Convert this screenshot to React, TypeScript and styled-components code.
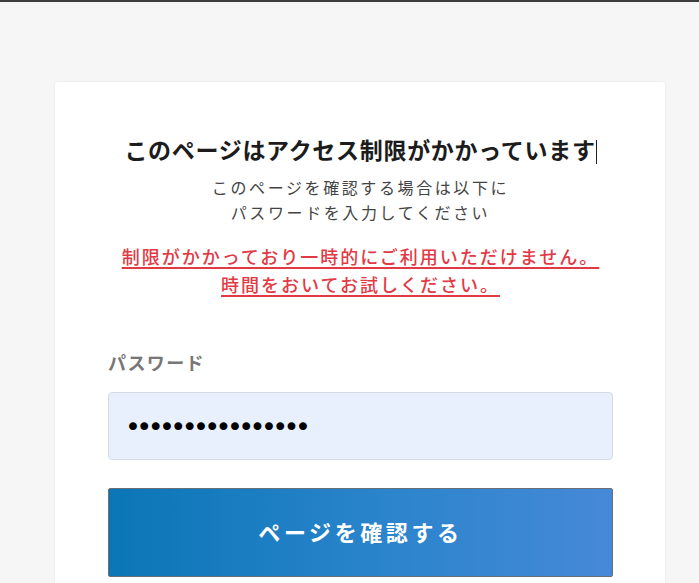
import React from "react";
import styled, { createGlobalStyle } from "styled-components";

const Global = createGlobalStyle`
  html, body { margin: 0; padding: 0; background: #f6f6f6; }
  body { font-family: "Noto Sans CJK JP", "Noto Sans", sans-serif; overflow: hidden; }
`;

const TopLine = styled.div`
  height: 2px;
  background: #3c3c3c;
`;

const Page = styled.div`
  padding: 80px 0 0 55px;
`;

const Card = styled.div`
  width: 610px;
  box-sizing: border-box;
  background: #fff;
  border-radius: 4px;
  box-shadow: 0 0 3px rgba(0, 0, 0, 0.08);
  padding: 51px 52px 40px 53px;
  display: flex;
  flex-direction: column;
  min-height: 560px;
`;

const Title = styled.h1`
  margin: 0;
  text-align: center;
  font-size: 23px;
  font-weight: 700;
  letter-spacing: 0.7px;
  line-height: 33px;
  color: #1c1c1c;
  white-space: nowrap;
`;

const Caret = styled.span`
  display: inline-block;
  width: 1px;
  height: 24px;
  background: #222;
  vertical-align: -5px;
`;

const Sub = styled.p`
  margin: 9px 0 0;
  text-align: center;
  font-size: 16px;
  line-height: 25px;
  letter-spacing: 2.6px;
  color: #444;
`;

const Alert = styled.p`
  margin: 17px 0 0;
  text-align: center;
  font-size: 18px;
  line-height: 28px;
  letter-spacing: 2px;
  font-weight: 500;
  color: #e23a45;
  text-decoration: underline;
  text-decoration-thickness: 2px;
  text-underline-offset: 3px;
`;

const Label = styled.label`
  margin-top: 52px;
  font-size: 18px;
  line-height: 24px;
  font-weight: 700;
  letter-spacing: 1.4px;
  color: #777;
`;

const Input = styled.input`
  margin-top: 18px;
  height: 68px;
  box-sizing: border-box;
  width: 100%;
  background: #e8f0fe;
  border: 1px solid #d6dbe3;
  border-radius: 4px;
  padding: 0 16px;
  font-size: 27px;
  letter-spacing: -4.6px;
  color: #000;
  outline: none;
  font-family: "DejaVu Sans", sans-serif;
`;

const Button = styled.button`
  margin-top: 28px;
  height: 89px;
  width: 100%;
  border: 1px solid #6a6f75;
  border-radius: 2px;
  background: linear-gradient(90deg, #0a76b6 0%, #2b84cc 55%, #4689d9 100%);
  color: #fff;
  font-family: "Noto Sans CJK JP", sans-serif;
  font-size: 22px;
  font-weight: 700;
  letter-spacing: 3.6px;
  padding-bottom: 4px;
  cursor: pointer;
`;

export default function App() {
  return (
    <>
      <Global />
      <TopLine />
      <Page>
        <Card>
          <Title>
            このページはアクセス制限がかかっています<Caret />
          </Title>
          <Sub>
            このページを確認する場合は以下に
            <br />
            パスワードを入力してください
          </Sub>
          <Alert>
            制限がかかっており一時的にご利用いただけません。
            <br />
            時間をおいてお試しください。
          </Alert>
          <Label htmlFor="pw">パスワード</Label>
          <Input id="pw" type="password" readOnly value="abcdefghijklmnop" />
          <Button type="button">ページを確認する</Button>
        </Card>
      </Page>
    </>
  );
}
